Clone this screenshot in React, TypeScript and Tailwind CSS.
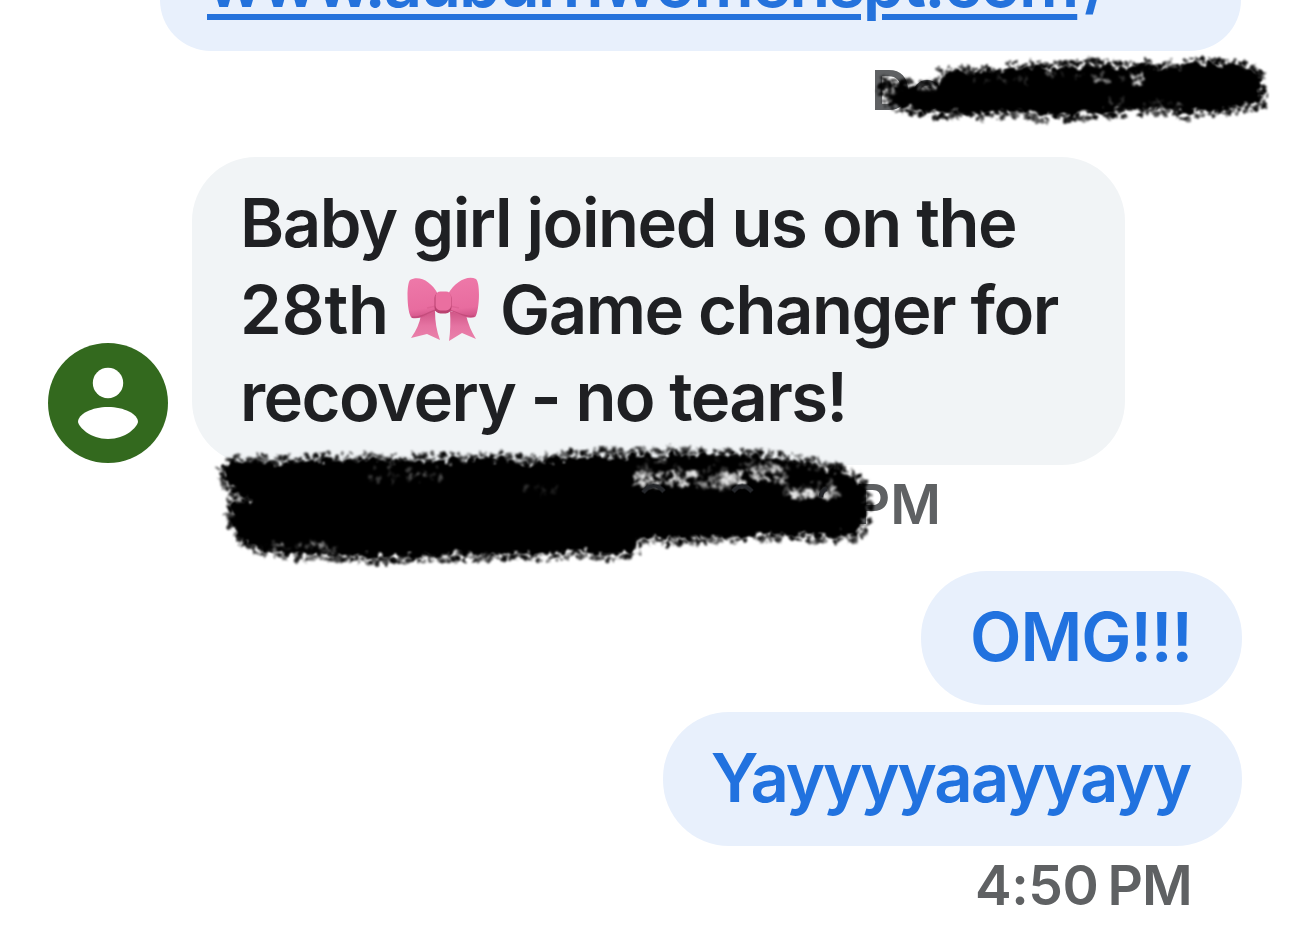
type Point = [number, number];

// Small seeded generator so the marker texture stays the same on every render
function createRandom(seed: number) {
    let s = seed;
    return () => {
        s = (s * 1664525 + 1013904223) % 4294967296;
        return s / 4294967296;
    };
}

function edgeDots(points: Point[], seed: number) {
    const random = createRandom(seed);
    const dots: { x: number; y: number; r: number; o: number }[] = [];
    points.forEach(([x1, y1], i) => {
        const [x2, y2] = points[(i + 1) % points.length];
        const length = Math.hypot(x2 - x1, y2 - y1) || 1;
        const nx = (y2 - y1) / length;
        const ny = -(x2 - x1) / length;
        for (let d = 0; d < length; d += 1.1) {
            const t = d / length;
            const offset = random() * 12 - 5;
            dots.push({
                x: x1 + (x2 - x1) * t + nx * offset,
                y: y1 + (y2 - y1) * t + ny * offset,
                r: 0.9 + random() * 1.8,
                o: 0.5 + random() * 0.5,
            });
        }
    });
    return dots;
}

function patchDots(patches: number[][], seed: number) {
    const random = createRandom(seed);
    return patches.flatMap(([x, y, w, h, count, strength]) =>
        Array.from({ length: count }, () => ({
            x: x + random() * w,
            y: y + random() * h,
            rx: 1.2 + random() * 3.2,
            ry: 0.8 + random() * 1.5,
            a: random() * 180,
            o: (0.4 + random() * 0.6) * strength,
        }))
    );
}

const shortMark: Point[] = [
    [881, 84], [892, 81], [906, 86], [922, 88], [940, 85], [947, 72], [970, 71], [1000, 70], [1025, 67],
    [1060, 68], [1100, 65], [1125, 68], [1140, 65], [1160, 69], [1200, 63], [1225, 64], [1245, 68], [1260, 71],
    [1262, 88], [1259, 105], [1235, 106], [1210, 110], [1180, 112], [1165, 107], [1115, 110], [1080, 113],
    [1050, 115], [1020, 111], [980, 113], [958, 112], [930, 110], [910, 108], [892, 103],
];

const longMark: Point[] = [
    [225, 466], [234, 462], [260, 462], [300, 462], [330, 459], [370, 459], [400, 461], [450, 460], [500, 459],
    [530, 463], [560, 459], [600, 456], [640, 454], [700, 455], [750, 455], [800, 461], [840, 469], [861, 480],
    [867, 500], [864, 520], [858, 536], [840, 535], [790, 534], [760, 534], [720, 536], [690, 538], [650, 536],
    [637, 539], [634, 552], [600, 554], [580, 551], [540, 554], [500, 553], [450, 554], [400, 556], [360, 556],
    [330, 554], [300, 552], [270, 550], [250, 543], [240, 535], [234, 523], [231, 510], [236, 504], [252, 499],
    [236, 491], [228, 482],
];

// x, y, width, height, count, strength
const shortPatches = [
    [884, 80, 16, 22, 20, 0.55],
    [1050, 72, 90, 8, 14, 0.35],
    [1132, 74, 12, 10, 12, 0.85],
    [1098, 78, 12, 5, 6, 0.5],
    [970, 73, 60, 8, 9, 0.25],
    [1110, 100, 75, 10, 16, 0.4],
    [920, 86, 18, 4, 8, 0.7],
];

const longPatches = [
    [636, 471, 62, 15, 66, 0.85],
    [694, 474, 40, 13, 30, 0.5],
    [722, 471, 22, 13, 36, 0.9],
    [752, 465, 34, 17, 38, 0.7],
    [782, 480, 54, 14, 26, 0.45],
    [791, 490, 24, 7, 34, 0.95],
    [824, 489, 14, 8, 14, 0.8],
    [370, 466, 75, 16, 26, 0.35],
    [520, 484, 45, 8, 8, 0.2],
    [270, 541, 70, 12, 26, 0.5],
    [640, 459, 180, 14, 38, 0.3],
];

function Marker({ points, patches, seed }: { points: Point[]; patches: number[][]; seed: number }) {
    return (
        <>
            <polygon points={points.map((p) => p.join(",")).join(" ")} fill="#000" filter="url(#rough)" />
            <g filter="url(#grain)">
                {patchDots(patches, seed).map((d, i) => (
                    <ellipse
                        key={i}
                        rx={d.rx}
                        ry={d.ry}
                        fill="#efefef"
                        opacity={d.o}
                        transform={`translate(${d.x} ${d.y}) rotate(${d.a})`}
                    />
                ))}
                {edgeDots(points, seed + 7).map((d, i) => (
                    <circle key={i} cx={d.x} cy={d.y} r={d.r} opacity={d.o} />
                ))}
            </g>
        </>
    );
}

function Scribbles() {
    return (
        <svg className="pointer-events-none absolute inset-0" width="1290" height="935" viewBox="1 -0.5 1290 935">
            <defs>
                <filter id="rough" x="-5%" y="-20%" width="110%" height="140%" colorInterpolationFilters="sRGB">
                    <feTurbulence type="fractalNoise" baseFrequency="0.13" numOctaves="2" seed="4" result="noise" />
                    <feDisplacementMap in="SourceGraphic" in2="noise" scale="17" xChannelSelector="R" yChannelSelector="G" />
                    <feGaussianBlur stdDeviation="1" />
                </filter>
                <filter id="grain" x="-5%" y="-20%" width="110%" height="140%" colorInterpolationFilters="sRGB">
                    <feTurbulence type="fractalNoise" baseFrequency="0.2" numOctaves="2" seed="9" result="noise" />
                    <feDisplacementMap in="SourceGraphic" in2="noise" scale="7" xChannelSelector="R" yChannelSelector="G" />
                    <feGaussianBlur stdDeviation="0.9" />
                </filter>
            </defs>
            <Marker points={shortMark} patches={shortPatches} seed={21} />
            <Marker points={longMark} patches={longPatches} seed={58} />
            {/* Parts of the covered time that still show through */}
            <g fill="none" stroke="#25272b" strokeWidth="4.5">
                <path d="M644 492Q654 479 665 491" />
                <path d="M734 491Q743 480 753 491" />
                <path d="M822 497Q822 490 828 488" />
            </g>
        </svg>
    );
}

function Bow() {
    return (
        <svg className="mr-[21px] ml-[18px] inline-block h-[66px] w-[72px] align-[-9px]" viewBox="0 0 72 66">
            <defs>
                <linearGradient id="loop" x1="0" y1="0" x2="0.1" y2="1">
                    <stop offset="0" stopColor="#ee79a9" />
                    <stop offset="0.8" stopColor="#e86c9f" />
                    <stop offset="1" stopColor="#d3568a" />
                </linearGradient>
                <linearGradient id="tail" x1="0" y1="0" x2="0" y2="1">
                    <stop offset="0" stopColor="#cf5586" />
                    <stop offset="0.5" stopColor="#e573a2" />
                    <stop offset="1" stopColor="#ea82ab" />
                </linearGradient>
            </defs>
            <path d="M14 38L28 34Q28 50 33 63L20 57L4 61Q12 50 14 38Z" fill="url(#tail)" />
            <path d="M43 34L59 38Q62 51 69 62L55 56L42 64Q44 50 43 34Z" fill="url(#tail)" />
            <path d="M3 3C12-2 24 4 31 17V33C24 36 14 43 5 41C0 38-1 8 3 3Z" fill="url(#loop)" />
            <path d="M69 2C60-2 48 5 41 17V33C49 35 59 43 68 40C72 36 74 7 69 2Z" fill="url(#loop)" />
            <path d="M5 40C13 42 21 35 29 33M67 39C59 41 50 35 43 33" fill="none" stroke="#b8436f" strokeWidth="1.3" opacity="0.6" />
            <path d="M29 29L20 31M43 29L52 31" stroke="#c94c7e" strokeWidth="1.3" opacity="0.3" />
            <rect x="27.5" y="15" width="17" height="21.5" rx="6" fill="#b94270" />
            <rect x="28.5" y="14.5" width="15.5" height="19" rx="5" fill="#ea6fa0" />
        </svg>
    );
}

function Avatar() {
    return (
        <svg className="mb-[2px] size-[120px] shrink-0" viewBox="0 0 120 120">
            <circle cx="60" cy="60" r="60" fill="#33691e" />
            <circle cx="60" cy="40" r="15.2" fill="#fff" />
            <path d="M30 79C30 71 44 64 60 64S90 71 90 79C89 84 78 96 60 96S31 84 30 79Z" fill="#fff" />
        </svg>
    );
}

export default function App() {
    return (
        <main className="relative flex h-[935px] w-[1290px] flex-col overflow-hidden bg-white font-['Inter',sans-serif] text-[67px] leading-[87px] font-semibold text-[#1f2023]">
            <div className="mr-[49px] ml-[160px] flex h-[51px] shrink-0 items-end rounded-b-[64px] bg-[#e8f0fc] pb-[25px] pl-[47px] tracking-[-2.1px] whitespace-nowrap text-[#2472dc]">
                <a className="underline decoration-[6px] underline-offset-[7px]">www.auburnwomenspt.com</a>
                <span className="ml-[7px]">/</span>
            </div>

            <div className="h-[106px] shrink-0 pt-[6px] pl-[871px] text-[55px] leading-[67px] font-[600] text-[#5f6163]">De</div>

            <div className="flex h-[308px] shrink-0 items-end gap-[24px] pl-[48px]">
                <Avatar />
                <div className="h-full w-[933px] rounded-[64px] bg-[#f1f4f6] pt-[22px] pl-[48px] whitespace-nowrap">
                    <div className="h-[87px] tracking-[-1.45px]">Baby girl joined us on the</div>
                    <div className="h-[87px]">
                        <span className="tracking-[-0.1px]">28th</span>
                        <Bow />
                        <span className="tracking-[-1.5px]">Game changer for</span>
                    </div>
                    <div className="h-[87px] tracking-[-1.6px]">recovery - no tears!</div>
                </div>
            </div>

            <div className="flex h-[106px] w-[941px] shrink-0 justify-end pt-[6px] text-[55px] leading-[67px] font-[600] text-[#5f6163]">PM</div>

            <div className="flex shrink-0 flex-col items-end gap-[7px] pr-[48px] text-[#2172df]">
                <div className="flex h-[134px] w-[321px] justify-end rounded-[66px] bg-[#e8f0fc] pt-[22px] pr-[50px] tracking-[-1px]">OMG!!!</div>
                <div className="flex h-[134px] w-[579px] justify-end rounded-[66px] bg-[#e8f0fc] pt-[22px] pr-[52px] tracking-[-2.1px]">Yayyyyaayyayy</div>
            </div>
            <div className="flex shrink-0 justify-end gap-[9px] pt-[6px] pr-[98px] text-[55px] leading-[67px] font-[600] text-[#5f6163]">
                <span className="tracking-[-0.4px]">4:50</span>
                <span className="tracking-[-0.8px]">PM</span>
            </div>

            <Scribbles />
        </main>
    );
}
